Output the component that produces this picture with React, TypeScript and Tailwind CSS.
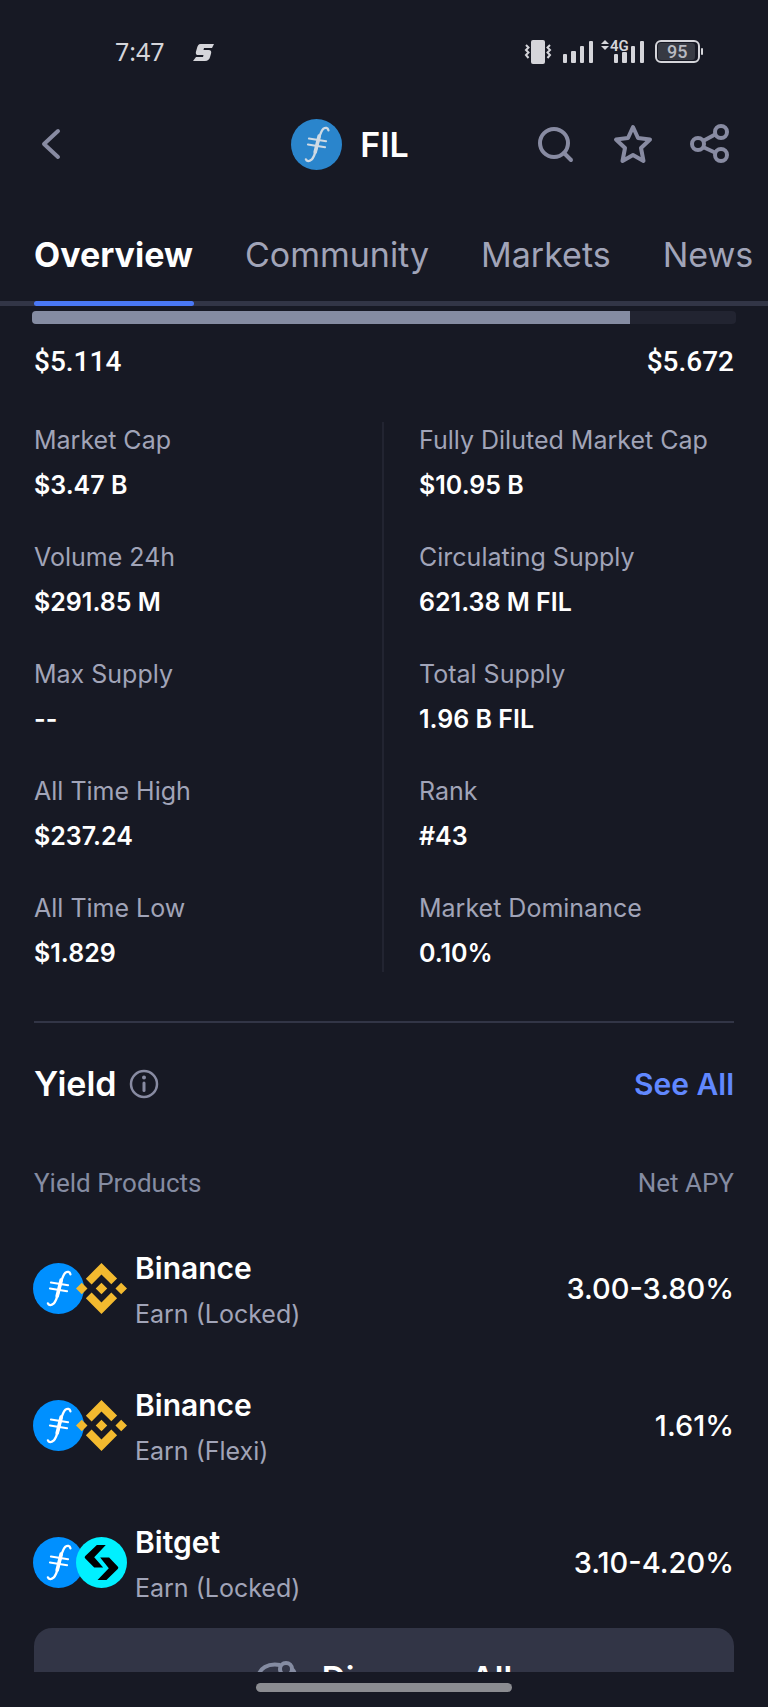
import React, { useState } from 'react';
import { SiBinance } from 'react-icons/si';

interface Stat {
  label: string;
  value: string;
}

interface YieldProduct {
  name: string;
  plan: string;
  apy: string;
  logo: 'binance' | 'bitget';
}

const tabs = ['Overview', 'Community', 'Markets', 'News'];

const leftStats: Stat[] = [
  { label: 'Market Cap', value: '$3.47 B' },
  { label: 'Volume 24h', value: '$291.85 M' },
  { label: 'Max Supply', value: '--' },
  { label: 'All Time High', value: '$237.24' },
  { label: 'All Time Low', value: '$1.829' },
];

const rightStats: Stat[] = [
  { label: 'Fully Diluted Market Cap', value: '$10.95 B' },
  { label: 'Circulating Supply', value: '621.38 M FIL' },
  { label: 'Total Supply', value: '1.96 B FIL' },
  { label: 'Rank', value: '#43' },
  { label: 'Market Dominance', value: '0.10%' },
];

const products: YieldProduct[] = [
  { name: 'Binance', plan: 'Earn (Locked)', apy: '3.00-3.80%', logo: 'binance' },
  { name: 'Binance', plan: 'Earn (Flexi)', apy: '1.61%', logo: 'binance' },
  { name: 'Bitget', plan: 'Earn (Locked)', apy: '3.10-4.20%', logo: 'bitget' },
];

const FilecoinLogo: React.FC<{ className: string }> = ({ className }) => (
  <svg viewBox="0 0 154 154" className={className} aria-hidden="true">
    <circle cx="77" cy="77" r="77" />
    <g stroke="currentColor" fill="none" strokeLinecap="round">
      <path d="M113 34c-2-8-9-9-15-5-7 6-10 17-14 31l-7 28c-4 16-8 28-15 35-7 6-15 5-17-1" strokeWidth="7" />
      <path d="M85 52l-12 48" strokeWidth="11" />
      <path d="M54 59l52 8M51 77l52 8" strokeWidth="6" />
    </g>
  </svg>
);

const BitgetLogo = () => (
  <svg viewBox="0 0 154 154" className="size-[51px]" aria-hidden="true">
    <circle cx="77" cy="77" r="77" fill="#00f0ff" />
    <path d="M90 24H63L28 57q-4 4 0 8l27 27h27L55 61z" fill="#000" />
    <path d="M73 62h27l26 27q4 4 0 8l-34 33H65l34-36z" fill="#000" />
  </svg>
);

const StatusBar = () => (
  <div className="flex h-26 items-center justify-between pr-16 pl-[115px] text-[#d5d5da]">
    <div className="flex items-center gap-7">
      <span className="font-['Noto_Sans'] text-[25px]">7:47</span>
      <svg width="21" height="17" viewBox="0 0 21 17" fill="currentColor" aria-hidden="true">
        <path d="M7.500 0H21l-2 4h-8l-.5 2h5c2.400 0 3.200 1.600 2.500 3.800l-.8 2.600C16.500 15.200 15 17 12 17H0l3-4h7l.5-2H5.600C3.200 11 2.300 9.800 3 7.400l.8-2.600C4.500 2 5.500 0 7.500 0z" />
      </svg>
    </div>
    <svg width="180" height="26" viewBox="0 0 180 26" aria-hidden="true">
      <rect x="7" y="1" width="14" height="24" rx="2" fill="currentColor" />
      <g fill="none" stroke="currentColor" strokeWidth="2">
        <path d="M2 6l2.500 2.500L2 11l2.500 2.500L2 16l2.500 3" />
        <path d="M26 6l-2.500 2.500L26 11l-2.500 2.500L26 16l-2.500 3" />
      </g>
      <g fill="currentColor">
        <rect x="39" y="15" width="4" height="9" rx="1" />
        <rect x="47" y="12" width="5" height="12" rx="1" />
        <rect x="56" y="7" width="4" height="17" rx="1" />
        <rect x="65" y="2" width="4" height="22" rx="1" />
        <path d="M81 1l4 4h-8zM81 11l4-4h-8z" />
        <rect x="90" y="15" width="4" height="9" rx="1" />
        <rect x="98" y="13" width="5" height="11" rx="1" />
        <rect x="107" y="7" width="4" height="17" rx="1" />
        <rect x="116" y="2" width="4" height="22" rx="1" />
        <text x="86" y="12" className="font-['Roboto'] text-[15px] font-semibold">4G</text>
      </g>
      <rect x="132" y="2" width="43" height="21" rx="5" fill="none" stroke="currentColor" strokeWidth="2" />
      <rect x="134" y="4" width="37" height="17" rx="3" fill="#373a43" />
      <rect x="177" y="9" width="2" height="7" rx="1" fill="currentColor" />
      <text x="143" y="19" fill="#b9bbc2" className="font-['Roboto'] text-[18px] font-medium">95</text>
    </svg>
  </div>
);

const Header = () => (
  <header className="relative flex h-20 items-center justify-between pr-[38px] pl-8 text-[#888ba2]">
    <button aria-label="Back" className="flex size-10 items-center">
      <svg width="40" height="40" viewBox="0 0 40 40" fill="none" stroke="currentColor" strokeWidth="4" strokeLinecap="round" strokeLinejoin="round"><path d="M26 7L12 20l14 13" /></svg>
    </button>
    <div className="absolute inset-x-0 mr-[68px] flex items-center justify-center gap-[18px] pointer-events-none">
      <FilecoinLogo className="size-[51px] fill-[#2a85cc] text-[#cfdae4]" />
      <h1 className="text-[34px] font-semibold text-white">FIL</h1>
    </div>
    <div className="flex gap-[37px]">
      <button aria-label="Search">
        <svg width="40" height="40" viewBox="0 0 40 40" fill="none" stroke="currentColor" strokeWidth="4" strokeLinecap="round"><circle cx="18" cy="19" r="14" /><path d="M28 29l7 7" /></svg>
      </button>
      <button aria-label="Add to watchlist">
        <svg width="40" height="40" viewBox="0 0 40 40" fill="none" stroke="currentColor" strokeWidth="4" strokeLinejoin="round"><path d="M20 3l5 11 12 1.500-9 8.500 2.500 13L20 31 9.500 37 12 24l-9-8.500L15 14z" /></svg>
      </button>
      <button aria-label="Share">
        <svg width="40" height="40" viewBox="0 0 40 40" fill="none" stroke="currentColor" strokeWidth="4"><circle cx="8" cy="20" r="6" /><circle cx="31" cy="8" r="6" /><circle cx="31" cy="31" r="6" /><path d="M13 17l13-7M13 23l13 6" /></svg>
      </button>
    </div>
  </header>
);

const StatList: React.FC<{ stats: Stat[] }> = ({ stats }) => (
  <dl className="flex flex-col gap-[35px]">
    {stats.map((stat) => (
      <div key={stat.label}>
        <dt className="text-[25px] leading-[37px] text-[#a1a4b8]">{stat.label}</dt>
        <dd className="mt-2 text-[25px] leading-[37px] font-semibold text-white">{stat.value}</dd>
      </div>
    ))}
  </dl>
);

export default function App() {
  const [active, setActive] = useState('Overview');

  return (
    <div className="flex min-h-screen flex-col overflow-hidden bg-[#171924] font-['Inter',sans-serif] text-white">
      <StatusBar />
      <Header />

      {/* Tabs */}
      <nav className="mt-7 flex h-[94px] gap-[52px] overflow-hidden border-b-5 border-[#323546] pl-[34px]">
        {tabs.map((tab) => (
          <button
            key={tab}
            onClick={() => setActive(tab)}
            className={`pb-1 text-[34px] whitespace-nowrap ${
              active === tab ? 'font-bold text-white' : 'text-[#a1a4b8]'
            }`}
          >
            {tab}
          </button>
        ))}
      </nav>
      {/* Active tab marker lies over the border */}
      <div className="relative">
        <div className="absolute bottom-0 left-[34px] h-[5px] w-40 rounded-full bg-[#4a78f5]" />
      </div>

      {/* 24h price range */}
      <section className="px-8 pt-[5px] font-['Roboto']">
        <div className="h-[13px] overflow-hidden rounded-sm bg-[#222431]">
          <div className="h-full w-[85%] bg-[#858ca2]" />
        </div>
        <div className="mt-[18px] flex justify-between px-0.5 text-[28px] leading-10 font-medium">
          <span>$5.114</span>
          <span>$5.672</span>
        </div>
      </section>

      {/* Statistics */}
      <section className="mx-[34px] mt-10 grid grid-cols-2 border-b-2 border-[#323546] pb-[49px]">
        <div className="border-r-2 border-[#222431]">
          <StatList stats={leftStats} />
        </div>
        <div className="pl-[35px]">
          <StatList stats={rightStats} />
        </div>
      </section>

      {/* Yield */}
      <section className="px-[34px]">
        <div className="mt-10 flex items-center justify-between">
          <div className="flex items-center gap-3">
            <h2 className="text-[34px] leading-[42px] font-semibold">Yield</h2>
            <button aria-label="About yield" className="text-[#888ba2]">
              <svg width="30" height="30" viewBox="0 0 30 30" fill="none" stroke="currentColor" strokeWidth="2.500" strokeLinecap="round"><circle cx="15" cy="15" r="13" /><path d="M15 14v7.500" strokeWidth="3" /><circle cx="15" cy="8.500" r="2" fill="currentColor" stroke="none" /></svg>
            </button>
          </div>
          <a href="#yield" className="text-[30px] leading-10 font-semibold text-[#6188ff]">See All</a>
        </div>

        <table className="mt-[60px] w-full">
          <thead>
            <tr className="font-['Roboto'] text-[26px] leading-9 text-[#858ca2]">
              <th scope="col" className="p-0 text-left font-normal">Yield Products</th>
              <th scope="col" className="p-0 text-right font-normal">Net APY</th>
            </tr>
          </thead>
          <tbody>
            {products.map((product, i) => (
              <tr key={i} className="h-[137px]">
                <td className="p-0 pt-[38px]">
                  <div className="-ml-px flex items-center gap-2">
                    <div className="flex">
                      <FilecoinLogo className="size-[51px] fill-[#0090ff] text-white" />
                      <div className="-ml-2">
                        {product.logo === 'binance' ? <SiBinance className="size-[51px] text-[#f3ba2f]" /> : <BitgetLogo />}
                      </div>
                    </div>
                    <div>
                      <p className="text-[30px] leading-11 font-semibold">{product.name}</p>
                      <p className="mt-1.5 text-[25px] leading-9 text-[#a1a4b8]">{product.plan}</p>
                    </div>
                  </div>
                </td>
                <td className="p-0 pt-[38px] text-right text-[29px] font-medium">{product.apy}</td>
              </tr>
            ))}
          </tbody>
        </table>
      </section>

      <div className="mt-4 h-11 overflow-hidden px-[34px]">
        <button className="flex h-[102px] w-full items-center justify-center gap-6 rounded-[18px] bg-[#323546] text-[33px] font-semibold">
          <svg width="42" height="36" viewBox="0 0 42 36" fill="none" stroke="#858ca2" strokeWidth="4" aria-hidden="true"><path d="M24 4C12 2 3 7 2 17c0 6 3 9 6 12v5h6v-4h10v4h6v-6c6-3 9-7 9-13 0-3-1-5-3-7" /><circle cx="30" cy="8" r="6" /></svg>
          Discover All
        </button>
      </div>
      <div className="flex h-[31px] items-center justify-center">
        <div className="h-[9px] w-1/3 rounded-full bg-[#8b8c91]" />
      </div>
    </div>
  );
}
